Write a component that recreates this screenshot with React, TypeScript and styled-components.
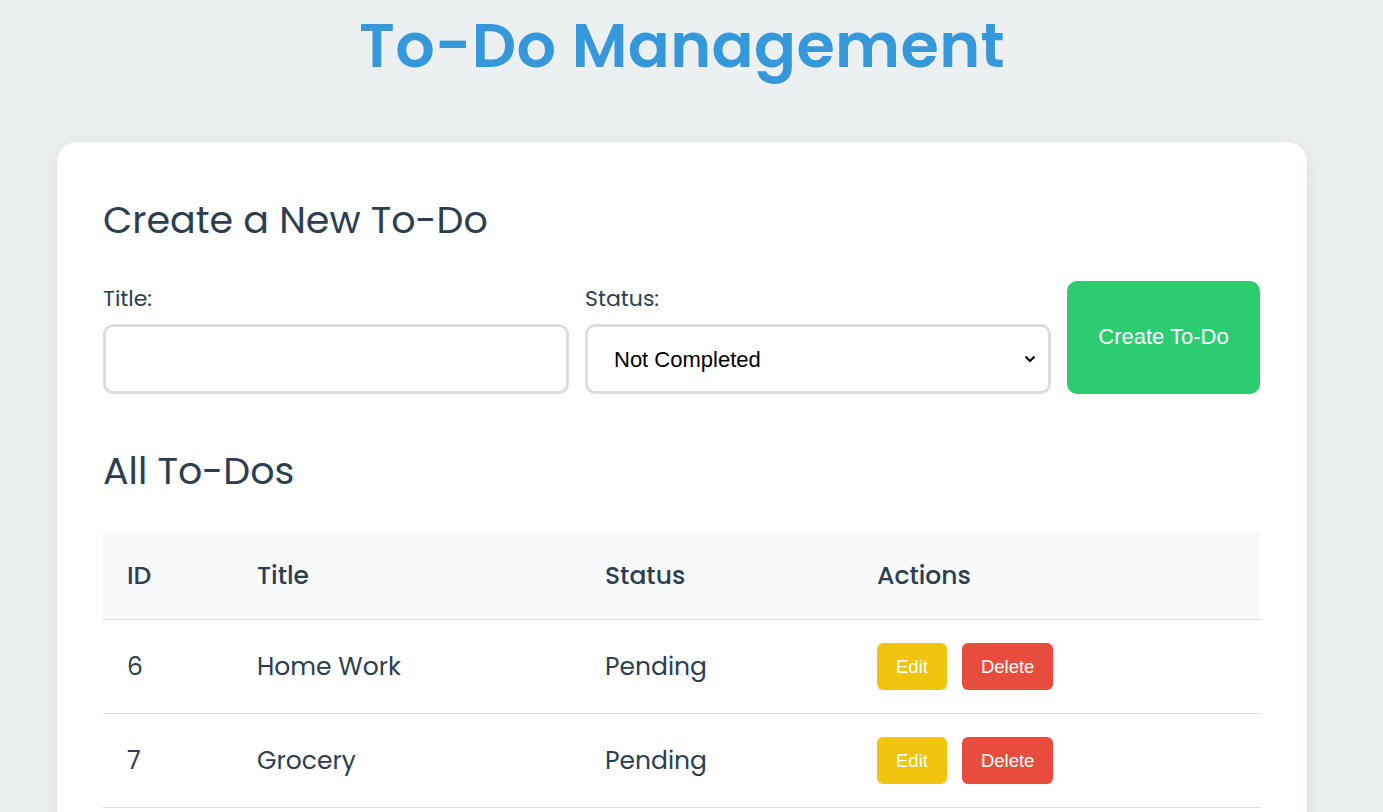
import { FC, useState } from 'react';
import styled, { createGlobalStyle } from 'styled-components';

interface Todo {
  id: number;
  title: string;
  status: string;
}

const GlobalStyle = createGlobalStyle`
  html, body {
    margin: 0;
    padding: 0;
    background-color: #ecf0f1;
  }

  body {
    font-family: 'Poppins', 'Open Sans', 'DejaVu Sans', sans-serif;
    color: #2c3e50;
  }
`;

// the reference was taken with a scrollbar, so the content area is 1364px wide
const Page = styled.div`
  max-width: 1364px;
  display: flex;
  flex-direction: column;
  align-items: center;
  padding-bottom: 40px;
`;

const Heading = styled.h1`
  margin: 6px 0 56px;
  font-size: 62px;
  font-weight: 600;
  color: #3498db;
  line-height: 80px;
  letter-spacing: 0.4px;
`;

const Card = styled.div`
  box-sizing: border-box;
  width: 1250px;
  background-color: #fff;
  border-radius: 20px;
  padding: 49px 47px 46px 46px;
  box-shadow: 0 4px 24px rgba(0, 0, 0, 0.08);
`;

const SectionTitle = styled.h2`
  margin: 0;
  font-size: 38px;
  font-weight: 400;
  line-height: 57px;
  color: #2c3e50;
`;

const Form = styled.form`
  display: flex;
  align-items: stretch;
  gap: 16px;
  margin: 33px 0 48px;
`;

const Field = styled.div`
  flex: 1;
  display: flex;
  flex-direction: column;
`;

const Label = styled.label`
  font-size: 22px;
  line-height: 33px;
  margin: 1px 0 9px;
  color: #2c3e50;
`;

const inputBase = `
  box-sizing: border-box;
  width: 100%;
  height: 70px;
  border: 3px solid #dddddd;
  border-radius: 10px;
  background: #fff;
  outline: none;
`;

const TextInput = styled.input`
  ${inputBase}
  padding: 0 26px;
  font-family: 'Liberation Sans', Arial, sans-serif;
  font-size: 22px;
`;

const SelectWrap = styled.div`
  position: relative;
`;

const Select = styled.select`
  ${inputBase}
  appearance: none;
  padding: 0 26px;
  font-family: 'Liberation Sans', Arial, sans-serif;
  font-size: 22px;
  color: #000;
`;

const Chevron = styled.svg`
  position: absolute;
  right: 15px;
  top: 31px;
  pointer-events: none;
`;

const CreateButton = styled.button`
  width: 193px;
  border: none;
  border-radius: 10px;
  background-color: #2ecc71;
  color: #fff;
  font-family: 'Liberation Sans', Arial, sans-serif;
  font-size: 22px;
  padding: 0 0 2px;
  cursor: pointer;
`;

const Table = styled.table`
  width: 100%;
  margin-top: 34px;
  border-collapse: collapse;
  table-layout: fixed;
`;

const HeadCell = styled.th<{ $width?: number }>`
  width: ${({ $width }) => ($width ? `${$width}px` : 'auto')};
  height: 86px;
  padding: 0 24px;
  text-align: left;
  background-color: #f7f9fa;
  font-size: 25px;
  font-weight: 500;
  color: #2c3e50;
  border-bottom: 1px solid #dddddd;
`;

const Cell = styled.td`
  height: 93px;
  padding: 0 24px;
  font-size: 25px;
  color: #2c3e50;
  border-bottom: 1px solid #dddddd;
`;

const Actions = styled.div`
  display: flex;
  gap: 15px;
`;

const ActionButton = styled.button<{ $variant: 'edit' | 'delete' }>`
  height: 47px;
  padding: 0 19px;
  border: none;
  border-radius: 6px;
  background-color: ${({ $variant }) => ($variant === 'edit' ? '#f1c40f' : '#e74c3c')};
  color: #fff;
  font-family: 'Liberation Sans', Arial, sans-serif;
  font-size: 18.5px;
  cursor: pointer;
`;

const initialTodos: Todo[] = [
  { id: 6, title: 'Home Work', status: 'Pending' },
  { id: 7, title: 'Grocery', status: 'Pending' },
];

const App: FC = () => {
  const [todos] = useState<Todo[]>(initialTodos);
  const [title, setTitle] = useState('');
  const [status, setStatus] = useState('Not Completed');

  return (
    <>
      <GlobalStyle />
      <Page>
        <Heading>To-Do Management</Heading>
        <Card>
          <SectionTitle>Create a New To-Do</SectionTitle>
          <Form onSubmit={(e) => e.preventDefault()}>
            <Field>
              <Label>Title:</Label>
              <TextInput value={title} onChange={(e) => setTitle(e.target.value)} />
            </Field>
            <Field>
              <Label>Status:</Label>
              <SelectWrap>
                <Select value={status} onChange={(e) => setStatus(e.target.value)}>
                  <option>Not Completed</option>
                  <option>Completed</option>
                </Select>
                <Chevron width="12" height="8" viewBox="0 0 12 8">
                  <path d="M1.5 1.5 L6 6 L10.5 1.5" fill="none" stroke="#000" strokeWidth="2" />
                </Chevron>
              </SelectWrap>
            </Field>
            <CreateButton type="submit">Create To-Do</CreateButton>
          </Form>

          <SectionTitle>All To-Dos</SectionTitle>
          <Table>
            <thead>
              <tr>
                <HeadCell $width={82}>ID</HeadCell>
                <HeadCell $width={300}>Title</HeadCell>
                <HeadCell $width={224}>Status</HeadCell>
                <HeadCell>Actions</HeadCell>
              </tr>
            </thead>
            <tbody>
              {todos.map((todo) => (
                <tr key={todo.id}>
                  <Cell>{todo.id}</Cell>
                  <Cell>{todo.title}</Cell>
                  <Cell>{todo.status}</Cell>
                  <Cell>
                    <Actions>
                      <ActionButton $variant="edit">Edit</ActionButton>
                      <ActionButton $variant="delete">Delete</ActionButton>
                    </Actions>
                  </Cell>
                </tr>
              ))}
            </tbody>
          </Table>
        </Card>
      </Page>
    </>
  );
};

export default App;
